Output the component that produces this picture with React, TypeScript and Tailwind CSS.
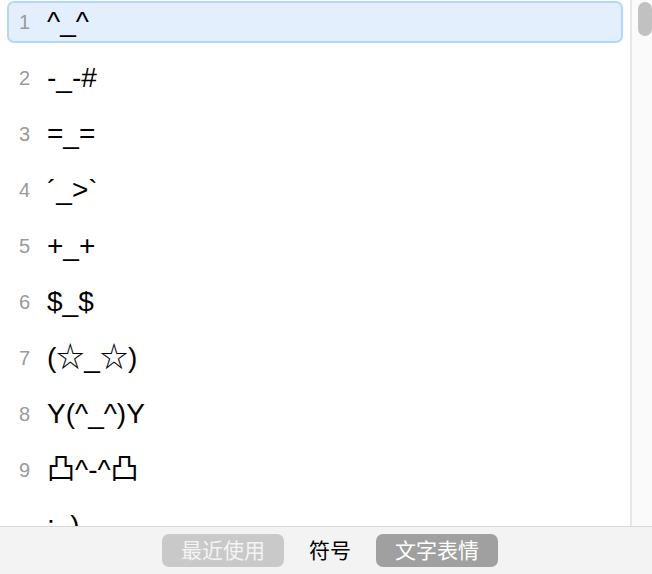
const ITEMS = ['^_^', '-_-#', '=_=', '´_>`', '+_+', '$_$', '(☆_☆)', 'Y(^_^)Y', '凸^-^凸', ':_)']

const FONT = 'font-["Liberation_Sans","Noto_Sans_CJK_SC",sans-serif]'

export default function App() {
  return (
    <div className={`w-[652px] h-[574px] flex flex-col bg-white overflow-hidden ${FONT}`}>
      <div className="h-[526px] flex overflow-hidden">
        <div className="flex-1 pt-[1px] px-[7px] overflow-hidden">
          {ITEMS.map((item, i) => (
            <div
              key={i}
              className={`h-[42px] mb-[14px] flex items-center rounded-[7px] ${
                i === 0 ? 'bg-[#e3effd] border-2 border-[#b3d7fb]' : 'border-2 border-transparent'
              }`}
            >
              {/* shortcut numbers only go to 9 */}
              <span className="w-[38px] pl-[10px] text-[20px] text-[#9a9a9a] leading-none">{i < 9 ? i + 1 : ''}</span>
              <span className="text-[28px] text-black leading-none whitespace-nowrap">{item}</span>
            </div>
          ))}
        </div>
        <div className="w-[22px] shrink-0 border-l-2 border-[#e8e8e8] bg-[#fafafa] pt-[2px] pl-[6px]">
          <div className="w-[14px] h-[34px] rounded-full bg-[#c1c1c1]" />
        </div>
      </div>
      <div className="flex-1 border-t border-[#d9d9d9] bg-[#f3f3f3] flex items-center justify-center gap-[25px] pl-[8px]">
        <button className="w-[122px] h-[33px] rounded-[7px] bg-[#c9c9c9] text-[#f4f4f4] text-[21px] leading-none">
          最近使用
        </button>
        <button className="h-[33px] text-black text-[21px] leading-none">符号</button>
        <button className="w-[122px] h-[33px] rounded-[7px] bg-[#a0a0a0] text-white text-[21px] leading-none">
          文字表情
        </button>
      </div>
    </div>
  )
}
